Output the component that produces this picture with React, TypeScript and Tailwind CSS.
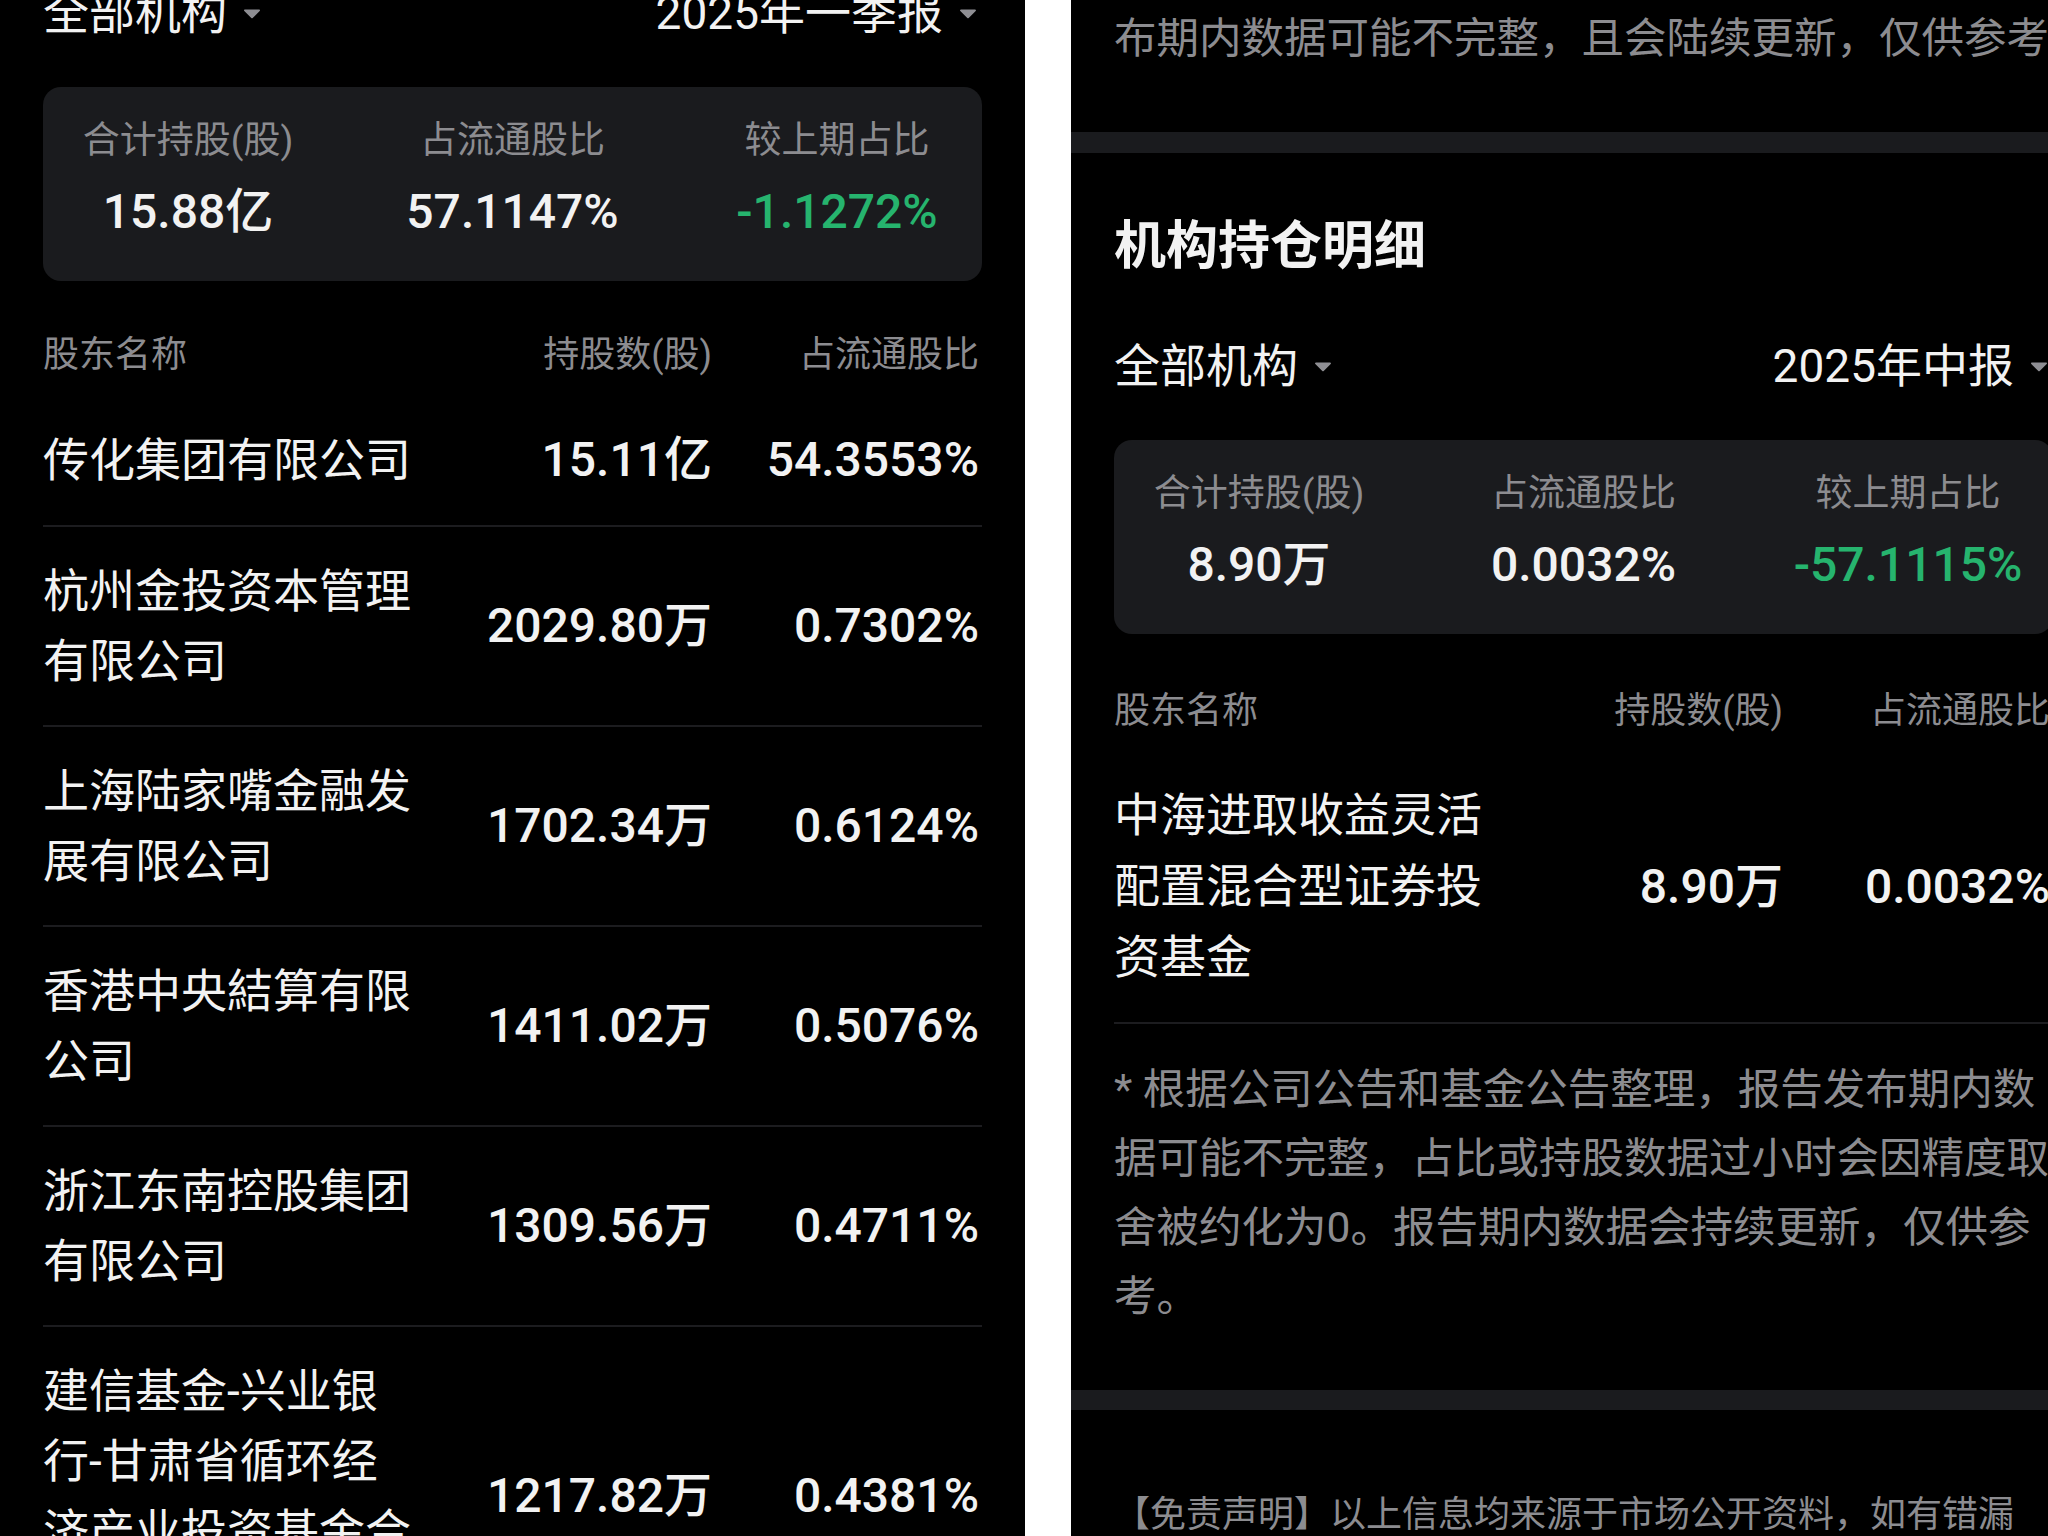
import React from 'react';

interface Holder {
  name: string;
  shares: string;
  ratio: string;
}

interface Summary {
  total: string;
  ratio: string;
  change: string;
}

const leftHolders: Holder[] = [
  { name: '传化集团有限公司', shares: '15.11亿', ratio: '54.3553%' },
  { name: '杭州金投资本管理有限公司', shares: '2029.80万', ratio: '0.7302%' },
  { name: '上海陆家嘴金融发展有限公司', shares: '1702.34万', ratio: '0.6124%' },
  { name: '香港中央結算有限公司', shares: '1411.02万', ratio: '0.5076%' },
  { name: '浙江东南控股集团有限公司', shares: '1309.56万', ratio: '0.4711%' },
  {
    name: '建信基金-兴业银行-甘肃省循环经济产业投资基金合伙企业(有限合伙)',
    shares: '1217.82万',
    ratio: '0.4381%',
  },
];

const rightHolders: Holder[] = [
  { name: '中海进取收益灵活配置混合型证券投资基金', shares: '8.90万', ratio: '0.0032%' },
];

function Caret() {
  return (
    <svg width="18" height="11" viewBox="0 0 18 11" className="ml-[16px] shrink-0">
      <path
        d="M2 1.5h14c.9 0 1.3 1 .7 1.6l-7 6.8c-.4.4-1 .4-1.4 0l-7-6.8C.7 2.5 1.1 1.5 2 1.5z"
        fill="#8e8e93"
      />
    </svg>
  );
}

function FilterRow({ period, className }: { period: string; className: string }) {
  return (
    <div className={`flex h-[60px] items-center justify-between pr-[5px] text-[46px] text-[#f2f2f2] ${className}`}>
      <div className="flex items-center">
        <span>全部机构</span>
        <Caret />
      </div>
      <div className="flex items-center">
        <span>{period}</span>
        <Caret />
      </div>
    </div>
  );
}

function SummaryCard({ data }: { data: Summary }) {
  const items = [
    { label: '合计持股(股)', value: data.total, green: false },
    { label: '占流通股比', value: data.ratio, green: false },
    { label: '较上期占比', value: data.change, green: true },
  ];
  return (
    <div className="mt-[44px] flex h-[194px] justify-between rounded-[18px] bg-[#1a1b1e] px-[5px] pt-[29px]">
      {items.map((item) => (
        <div key={item.label} className="flex w-[280px] flex-col items-center">
          <div className="text-[37px] leading-[50px] text-[#8c8c90]">{item.label}</div>
          <div
            className={`mt-[16px] text-[48px] font-medium leading-[60px] ${
              item.green ? 'text-[#26b46e]' : 'text-[#f2f2f2]'
            }`}
          >
            {item.value}
          </div>
        </div>
      ))}
    </div>
  );
}

function HoldersTable({ rows, lineClass }: { rows: Holder[]; lineClass: string }) {
  return (
    <div>
      <div className="mb-[10px] mt-[44px] flex h-[60px] items-center pr-[3px] text-[36px] text-[#8c8c90]">
        <div className="w-[378px] shrink-0">股东名称</div>
        <div className="flex-1 text-right">持股数(股)</div>
        <div className="w-[267px] shrink-0 text-right">占流通股比</div>
      </div>
      {rows.map((row) => (
        <div key={row.name} className="flex items-center border-b-2 border-[#1c1c1f] py-[29px] pr-[3px]">
          <div className={`w-[378px] shrink-0 text-[46px] text-[#f2f2f2] ${lineClass}`}>{row.name}</div>
          <div className="flex-1 text-right text-[48px] font-medium text-[#f2f2f2]">{row.shares}</div>
          <div className="w-[267px] shrink-0 text-right text-[48px] font-medium text-[#f2f2f2]">{row.ratio}</div>
        </div>
      ))}
    </div>
  );
}

export default function App() {
  return (
    <div className="flex h-[1536px] w-[2048px] overflow-hidden bg-white font-[family-name:Roboto,'Noto_Sans_CJK_SC',sans-serif]">
      {/* left screenshot */}
      <div className="h-full w-[1025px] shrink-0 overflow-hidden bg-black">
        <div className="ml-[43px] w-[939px]">
          <FilterRow period="2025年一季报" className="-mt-[17px]" />
          <SummaryCard data={{ total: '15.88亿', ratio: '57.1147%', change: '-1.1272%' }} />
          <HoldersTable rows={leftHolders} lineClass="leading-[70px]" />
        </div>
      </div>

      <div className="h-full w-[46px] shrink-0 bg-white" />

      {/* right screenshot */}
      <div className="h-full w-[1025px] shrink-0 overflow-hidden bg-black pt-[9px]">
        <div className="ml-[43px] whitespace-nowrap text-[42.5px] leading-[60px] text-[#8c8c90]">
          布期内数据可能不完整，且会陆续更新，仅供参考
        </div>
        <div className="mt-[63px] h-[21px] bg-[#1a1b1e]" />
        <div className="ml-[43px] w-[939px]">
          <div className="mt-[59px] text-[52px] font-bold leading-[70px] text-[#f2f2f2]">机构持仓明细</div>
          <FilterRow period="2025年中报" className="mt-[54px]" />
          <SummaryCard data={{ total: '8.90万', ratio: '0.0032%', change: '-57.1115%' }} />
          <div className="pt-[3px]">
            <HoldersTable rows={rightHolders} lineClass="leading-[71px]" />
          </div>
          <p className="mt-[31px] w-[950px] text-[42.5px] leading-[69px] text-[#8c8c90]">
            * 根据公司公告和基金公告整理，报告发布期内数据可能不完整，占比或持股数据过小时会因精度取舍被约化为0。报告期内数据会持续更新，仅供参考。
          </p>
        </div>
        <div className="mt-[59px] h-[20px] bg-[#1a1b1e]" />
        <p className="ml-[43px] mt-[75px] w-[920px] text-[36px] leading-[60px] text-[#8c8c90]">
          【免责声明】以上信息均来源于市场公开资料，如有错漏请以公司公告为准，本页面内容仅供参考，不构成投资建议。
        </p>
      </div>
    </div>
  );
}
